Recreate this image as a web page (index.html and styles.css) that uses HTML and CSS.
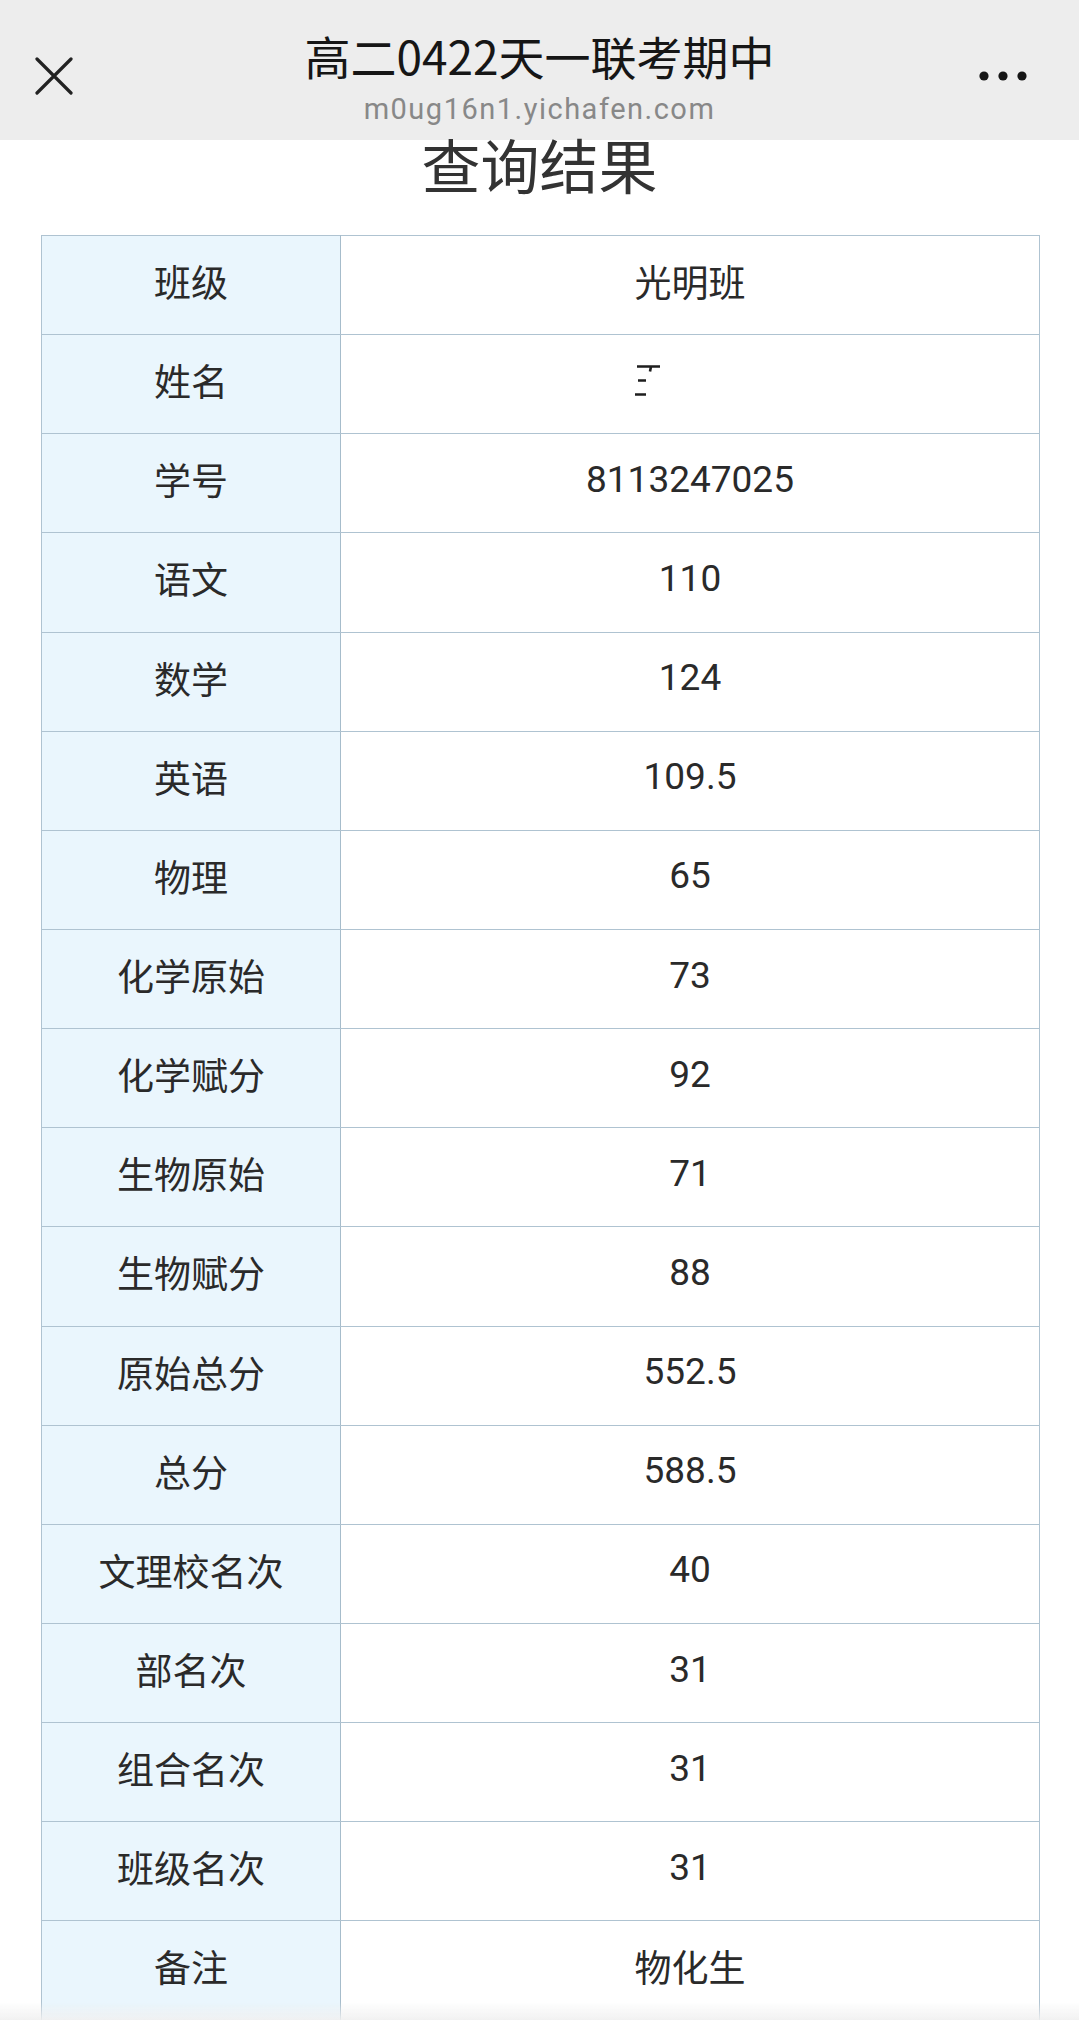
FILE: index.html
```html
<!DOCTYPE html>
<html lang="zh-CN">
<head>
<meta charset="utf-8">
<title>高二0422天一联考期中</title>
<link rel="stylesheet" href="styles.css">
</head>
<body>
<header class="topbar">
  <div class="side side-left">
    <svg class="icon-close" width="38" height="38" viewBox="0 0 38 38" aria-label="关闭">
      <path d="M2 2 L36 36 M36 2 L2 36" stroke="#222" stroke-width="3.2" stroke-linecap="round" fill="none"/>
    </svg>
  </div>
  <div class="center">
    <div class="page-name">高二0422天一联考期中</div>
    <div class="domain">m0ug16n1.yichafen.com</div>
  </div>
  <div class="side side-right">
    <svg class="icon-more" width="48" height="12" viewBox="0 0 48 12" aria-label="更多">
      <circle cx="5" cy="6" r="4.6" fill="#151515"/>
      <circle cx="24" cy="6" r="4.6" fill="#151515"/>
      <circle cx="43" cy="6" r="4.6" fill="#151515"/>
    </svg>
  </div>
</header>

<h1 class="result-title">查询结果</h1>

<table class="result">
  <colgroup><col class="c-label"><col class="c-value"></colgroup>
  <tr><td class="label">班级</td><td class="value">光明班</td></tr>
  <tr><td class="label">姓名</td><td class="value"><span class="redacted"><svg width="30" height="40" viewBox="0 0 30 40"><path d="M2 4.5 H25 M16 4.5 L15 9.5 M3 18.5 H11 M0 32.5 H11" stroke="#1e1e1e" stroke-width="2.6" fill="none"/></svg></span></td></tr>
  <tr><td class="label">学号</td><td class="value">8113247025</td></tr>
  <tr><td class="label">语文</td><td class="value">110</td></tr>
  <tr><td class="label">数学</td><td class="value">124</td></tr>
  <tr><td class="label">英语</td><td class="value">109.5</td></tr>
  <tr><td class="label">物理</td><td class="value">65</td></tr>
  <tr><td class="label">化学原始</td><td class="value">73</td></tr>
  <tr><td class="label">化学赋分</td><td class="value">92</td></tr>
  <tr><td class="label">生物原始</td><td class="value">71</td></tr>
  <tr><td class="label">生物赋分</td><td class="value">88</td></tr>
  <tr><td class="label">原始总分</td><td class="value">552.5</td></tr>
  <tr><td class="label">总分</td><td class="value">588.5</td></tr>
  <tr><td class="label">文理校名次</td><td class="value">40</td></tr>
  <tr><td class="label">部名次</td><td class="value">31</td></tr>
  <tr><td class="label">组合名次</td><td class="value">31</td></tr>
  <tr><td class="label">班级名次</td><td class="value">31</td></tr>
  <tr><td class="label">备注</td><td class="value">物化生</td></tr>
</table>

<div class="bottom-fade"></div>
</body>
</html>
```

FILE: styles.css
```css
* { box-sizing: border-box; }

html, body {
  margin: 0;
  padding: 0;
  background: #ffffff;
}

body {
  font-family: "Roboto", "Noto Sans CJK SC", sans-serif;
  color: #2a2a2a;
}

.topbar {
  height: 140px;
  background: #ededed;
  display: flex;
}

.side {
  width: 110px;
  flex: none;
  display: flex;
}

.side-left {
  padding-left: 35px;
  padding-top: 57px;
}

.side-right {
  justify-content: flex-end;
  padding-right: 52px;
  padding-top: 70px;
}

.icon-close, .icon-more { display: block; }

.center {
  flex: 1;
  text-align: center;
  padding-top: 28px;
}

.page-name {
  font-family: "Noto Sans CJK SC", sans-serif;
  font-size: 46px;
  line-height: 54px;
  font-weight: 400;
  color: #161616;
}

.domain {
  margin-top: 12px;
  font-family: "Roboto", sans-serif;
  font-size: 29px;
  line-height: 30px;
  letter-spacing: 1.5px;
  color: #888888;
}

.result-title {
  margin: 0;
  margin-top: -6px;
  height: 101px;
  text-align: center;
  font-family: "Noto Sans CJK SC", sans-serif;
  font-weight: 400;
  font-size: 59px;
  line-height: 59px;
  color: #333333;
}

.result {
  margin-left: 41px;
  width: 998px;
  border-collapse: collapse;
  table-layout: fixed;
}

.c-label { width: 299px; }
.c-value { width: 699px; }

.result tr { height: 99.15px; }

.result td {
  border: 1px solid #afc3d1;
  padding: 0 0 8px 0;
  text-align: center;
  vertical-align: middle;
  font-size: 37px;
  color: #2a2a2a;
}

.result td.label {
  background: #eaf6fd;
  border-right-color: #a6bccb;
}

.result td.value {
  background: #ffffff;
}

.redacted {
  display: inline-block;
  width: 111px;
  height: 40px;
  vertical-align: middle;
  text-align: left;
}

.redacted svg { display: block; }

.bottom-fade {
  position: fixed;
  left: 0;
  right: 0;
  bottom: 0;
  height: 18px;
  background: linear-gradient(to bottom, rgba(242,242,242,0), rgba(240,240,240,0.9));
  pointer-events: none;
}
```
